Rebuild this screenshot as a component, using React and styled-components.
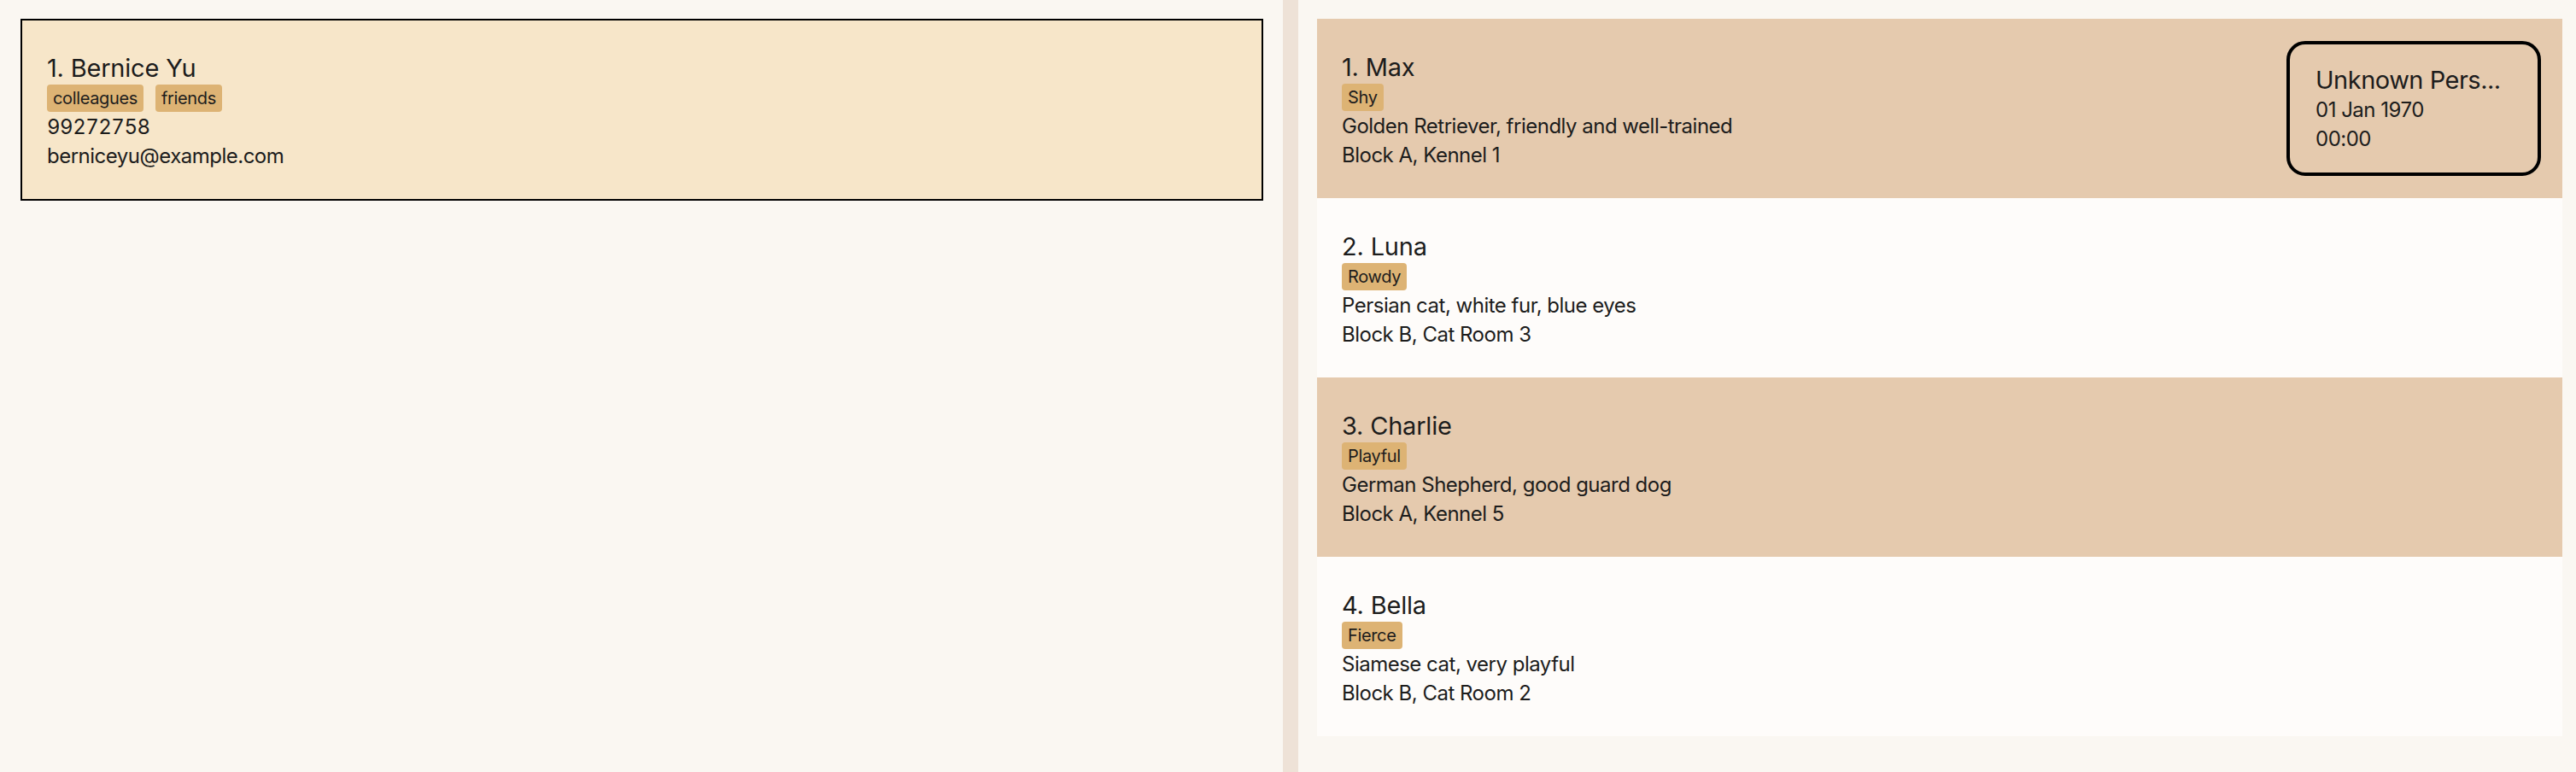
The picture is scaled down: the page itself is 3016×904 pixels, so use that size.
import React from "react";
import styled, { createGlobalStyle } from "styled-components";

const GlobalStyle = createGlobalStyle`
  html, body {
    margin: 0;
    padding: 0;
    background: #faf7f2;
  }
  body {
    font-family: Inter, "Noto Sans", "Liberation Sans", sans-serif;
    color: #1c1c1c;
  }
  * { box-sizing: border-box; }
`;

const Page = styled.div`
  display: flex;
  width: 3016px;
  height: 904px;
  background: #faf7f2;
  overflow: hidden;
`;

const LeftPanel = styled.section`
  width: 1502px;
  flex: none;
  padding: 22px 23px 0 24px;
`;

const Divider = styled.div`
  width: 18px;
  flex: none;
  background: #eee2d7;
`;

const RightPanel = styled.section`
  flex: 1;
  padding: 22px 16px 0 22px;
`;

const PersonCard = styled.article`
  background: #f7e6c9;
  border: 2px solid #000;
  padding: 37px 29px 33px;
`;

const PetList = styled.div`
  display: flex;
  flex-direction: column;
`;

const PetRow = styled.article`
  display: flex;
  align-items: flex-start;
  justify-content: space-between;
  height: 210px;
  padding: 38px 25px 0 29px;
  background: ${(p) => (p.$odd ? "#e5caae" : "#fefcfa")};
`;

const Info = styled.div`
  display: flex;
  flex-direction: column;
`;

const Title = styled.div`
  font-size: 29px;
  line-height: 37px;
  letter-spacing: -0.2px;
  white-space: nowrap;
`;

const Tags = styled.div`
  display: flex;
  gap: 14px;
  margin: 1px 0;
`;

const Tag = styled.span`
  background: #ddb374;
  border-radius: 4px;
  font-size: 20px;
  line-height: 24px;
  letter-spacing: -0.35px;
  padding: 4px 7px;
`;

const Line = styled.div`
  font-size: 24px;
  line-height: 34px;
  letter-spacing: -0.5px;
  font-variant-numeric: ${(p) => (p.$tabular ? "tabular-nums" : "normal")};
  white-space: nowrap;
`;

const ScheduleBox = styled.div`
  align-self: center;
  margin-top: -38px;
  width: 298px;
  height: 158px;
  border: 4px solid #000;
  border-radius: 22px;
  padding: 23px 28px 0 30px;
  display: flex;
  flex-direction: column;
`;

const BoxTitle = styled(Title)`
  letter-spacing: -0.5px;
`;

const pets = [
  {
    name: "Max",
    tag: "Shy",
    desc: "Golden Retriever, friendly and well-trained",
    loc: "Block A, Kennel 1",
    schedule: { who: "Unknown Pers...", date: "01 Jan 1970", time: "00:00" },
  },
  { name: "Luna", tag: "Rowdy", desc: "Persian cat, white fur, blue eyes", loc: "Block B, Cat Room 3" },
  { name: "Charlie", tag: "Playful", desc: "German Shepherd, good guard dog", loc: "Block A, Kennel 5" },
  { name: "Bella", tag: "Fierce", desc: "Siamese cat, very playful", loc: "Block B, Cat Room 2" },
];

export default function App() {
  return (
    <>
      <GlobalStyle />
      <Page>
        <LeftPanel>
          <PersonCard>
            <Info>
              <Title>1. Bernice Yu</Title>
              <Tags>
                <Tag>colleagues</Tag>
                <Tag>friends</Tag>
              </Tags>
              <Line $tabular>99272758</Line>
              <Line>berniceyu@example.com</Line>
            </Info>
          </PersonCard>
        </LeftPanel>
        <Divider />
        <RightPanel>
          <PetList>
            {pets.map((p, i) => (
              <PetRow key={p.name} $odd={i % 2 === 0}>
                <Info>
                  <Title>
                    {i + 1}. {p.name}
                  </Title>
                  <Tags>
                    <Tag>{p.tag}</Tag>
                  </Tags>
                  <Line>{p.desc}</Line>
                  <Line>{p.loc}</Line>
                </Info>
                {p.schedule && (
                  <ScheduleBox>
                    <BoxTitle>{p.schedule.who}</BoxTitle>
                    <Line>{p.schedule.date}</Line>
                    <Line>{p.schedule.time}</Line>
                  </ScheduleBox>
                )}
              </PetRow>
            ))}
          </PetList>
        </RightPanel>
      </Page>
    </>
  );
}
